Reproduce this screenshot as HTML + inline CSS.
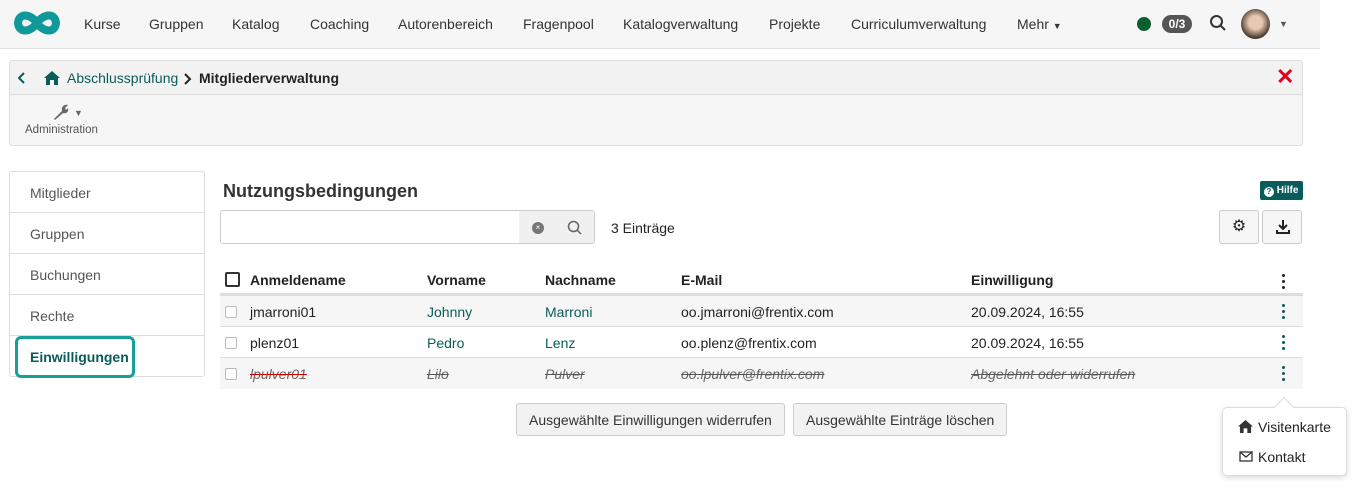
<!DOCTYPE html>
<html><head><meta charset="utf-8"><style>
*{box-sizing:border-box;margin:0;padding:0}
body{width:1356px;height:489px;background:#fff;font-family:"Liberation Sans",sans-serif;font-size:14px;color:#222;position:relative;overflow:hidden}
.abs{position:absolute}
.nav{left:0;top:0;width:1320px;height:49px;background:#f6f6f6;border-bottom:1px solid #e4e4e4}
.nav span{position:absolute;top:16px;font-size:14px;color:#333}
.teal{color:#0a5c5c}
.row{position:absolute;left:220px;width:1083px;height:31px;border-bottom:1px solid #ddd}
.row span{position:absolute;top:8px}
.s{text-decoration:line-through;text-decoration-color:#555;font-style:italic;color:#666}
.cb{position:absolute;left:5px;top:10px;width:12px;height:12px;border:1px solid #bbb;border-radius:2px;background:#fff}
.dots{position:absolute;left:1062px;top:8px;width:3px}
.dots i{display:block;width:3px;height:3px;border-radius:50%;background:#0a5c5c;margin-bottom:3px}
.side{left:9px;top:171px;width:196px;height:206px;border:1px solid #ddd;border-radius:3px}
.side div{height:41px;border-bottom:1px solid #ddd;padding:13px 0 0 20px;color:#555}
.btn{position:absolute;top:403px;height:33px;border:1px solid #ccc;border-radius:3px;background:#f2f2f2;padding:8px 12px;font-size:14px;color:#333}
</style></head><body>
<div class="abs nav">
<svg class="abs" style="left:11px;top:8px" width="52" height="30" viewBox="0 0 52 30"><path d="M26 15C20 6 8 4 7 15 8 26 20 24 26 15 32 6 44 4 45 15 44 26 32 24 26 15Z" fill="none" stroke="#11999a" stroke-width="8"/></svg>
<span style="left:84px">Kurse</span><span style="left:149px">Gruppen</span><span style="left:232px">Katalog</span><span style="left:310px">Coaching</span><span style="left:398px">Autorenbereich</span><span style="left:523px">Fragenpool</span><span style="left:623px">Katalogverwaltung</span><span style="left:769px">Projekte</span><span style="left:851px">Curriculumverwaltung</span><span style="left:1017px">Mehr <small style="font-size:9px">▼</small></span>
<div class="abs" style="left:1137px;top:17px;width:14px;height:14px;border-radius:50%;background:#0b5e2e"></div>
<div class="abs" style="left:1162px;top:15px;width:30px;height:18px;border-radius:9px;background:#555;color:#fff;font-size:12px;font-weight:bold;text-align:center;line-height:18px">0/3</div>
<svg class="abs" style="left:1209px;top:14px" width="18" height="18"><circle cx="7.5" cy="7.5" r="5.5" fill="none" stroke="#333" stroke-width="2"/><path d="M11.5 11.5 16 16" stroke="#333" stroke-width="2"/></svg>
<div class="abs" style="left:1241px;top:9px;width:29px;height:30px;border-radius:50%;background:radial-gradient(circle at 50% 45%,#e8c8b0 30%,#4a3a30 70%)"></div>
<span style="left:1279px;font-size:9px;top:19px;color:#555">▼</span>
</div>
<div class="abs" style="left:9px;top:60px;width:1294px;height:86px;border:1px solid #ddd;border-radius:3px;background:#f6f6f6">
<div style="height:34px;background:#f2f2f2;border-bottom:1px solid #ddd;position:relative">
<svg class="abs" style="left:8px;top:11px" width="8" height="12"><path d="M6 1 1 6 6 11" fill="none" stroke="#0a5c5c" stroke-width="2"/></svg>
<svg class="abs" style="left:34px;top:10px" width="16" height="14" viewBox="0 0 16 14"><path d="M8 0 16 7H14V14H10V9H6V14H2V7H0Z" fill="#0a5c5c"/></svg>
<span class="abs teal" style="left:57px;top:9px">Abschlussprüfung</span>
<svg class="abs" style="left:174px;top:12px" width="8" height="12"><path d="M1 1 6 6 1 11" fill="none" stroke="#222" stroke-width="2"/></svg>
<span class="abs" style="left:189px;top:9px"><b>Mitgliederverwaltung</b></span>
<span class="abs" style="left:1266px;top:3px;color:#e3001b;font-size:22px;font-weight:bold">✕</span>
</div>
<svg class="abs" style="left:42px;top:42px" width="18" height="18" viewBox="0 0 18 18"><path d="M2 16 10 8C9 4 12 1 16 2L13 5 14 7 16 5C17 9 14 11 11 10L3 17Z" fill="#666"/></svg>
<span class="abs" style="left:64px;top:47px;font-size:9px;color:#666">▼</span>
<span class="abs" style="left:15px;top:63px;font-size:11.5px;color:#555">Administration</span>
</div>
<div class="abs side"><div>Mitglieder</div><div>Gruppen</div><div>Buchungen</div><div>Rechte</div><div style="border:none"></div></div>
<div class="abs" style="left:15px;top:336px;width:120px;height:42px;border:3px solid #17a098;border-radius:6px;padding:10px 0 0 12px;font-weight:bold;color:#0a5c5c">Einwilligungen</div>
<div class="abs" style="left:223px;top:181px;font-size:18px;font-weight:bold;color:#333">Nutzungsbedingungen</div>
<div class="abs" style="left:1260px;top:181px;width:43px;height:19px;background:#0a5c5c;border-radius:2px;color:#fff;font-size:10px;font-weight:bold;padding:4px 0 0 4px"><span style="display:inline-block;width:10px;height:10px;border-radius:50%;background:#fff;color:#0a5c5c;font-size:8px;text-align:center;line-height:10px;vertical-align:-1px">?</span> Hilfe</div>
<div class="abs" style="left:220px;top:210px;width:375px;height:34px;border:1px solid #ccc;border-radius:3px;overflow:hidden"><div class="abs" style="left:298px;top:0;width:77px;height:34px;background:#f0f0f0"></div>
<div class="abs" style="left:311px;top:11px;width:12px;height:12px;border-radius:50%;background:#777;color:#fff;font-size:8px;text-align:center;line-height:12px">×</div>
<svg class="abs" style="left:346px;top:9px" width="16" height="16"><circle cx="6.5" cy="6.5" r="5" fill="none" stroke="#666" stroke-width="1.5"/><path d="M10 10 14 14" stroke="#666" stroke-width="1.5"/></svg></div>
<span class="abs" style="left:611px;top:220px">3 Einträge</span>
<div class="abs" style="left:1219px;top:210px;width:40px;height:34px;border:1px solid #ccc;border-radius:3px;background:#f6f6f6;text-align:center;line-height:32px;font-size:16px">⚙</div>
<div class="abs" style="left:1262px;top:210px;width:40px;height:34px;border:1px solid #ccc;border-radius:3px;background:#f6f6f6"><svg class="abs" style="left:13px;top:9px" width="14" height="14"><path d="M7 0V9M3 5 7 9 11 5M1 10V13H13V10" fill="none" stroke="#222" stroke-width="2"/></svg></div>
<div class="row" style="top:264px;height:32px;border-bottom:3px solid #ddd;font-weight:bold">
<div class="abs" style="left:5px;top:8px;width:15px;height:15px;border:2px solid #333;border-radius:2px"></div>
<span style="left:30px">Anmeldename</span><span style="left:207px">Vorname</span><span style="left:325px">Nachname</span><span style="left:461px">E-Mail</span><span style="left:751px">Einwilligung</span>
<div class="dots" style="top:10px"><i style="background:#222"></i><i style="background:#222"></i><i style="background:#222"></i></div></div>
<div class="row" style="top:296px;background:#f6f6f6"><div class="cb"></div><span style="left:30px">jmarroni01</span><span class="teal" style="left:207px">Johnny</span><span class="teal" style="left:325px">Marroni</span><span style="left:461px">oo.jmarroni@frentix.com</span><span style="left:751px">20.09.2024, 16:55</span><div class="dots"><i></i><i></i><i></i></div></div>
<div class="row" style="top:327px"><div class="cb"></div><span style="left:30px">plenz01</span><span class="teal" style="left:207px">Pedro</span><span class="teal" style="left:325px">Lenz</span><span style="left:461px">oo.plenz@frentix.com</span><span style="left:751px">20.09.2024, 16:55</span><div class="dots"><i></i><i></i><i></i></div></div>
<div class="row" style="top:358px;background:#f6f6f6;border:none"><div class="cb"></div><span class="s" style="left:30px;text-decoration-color:#c00">lpulver01</span><span class="s teal" style="left:207px">Lilo</span><span class="s teal" style="left:325px">Pulver</span><span class="s" style="left:461px">oo.lpulver@frentix.com</span><span class="s" style="left:751px">Abgelehnt oder widerrufen</span><div class="dots"><i></i><i></i><i></i></div></div>
<div class="btn" style="left:516px">Ausgewählte Einwilligungen widerrufen</div>
<div class="btn" style="left:793px">Ausgewählte Einträge löschen</div>
<div class="abs" style="left:1222px;top:407px;width:125px;height:69px;border:1px solid #ddd;border-radius:5px;background:#fff;box-shadow:0 2px 6px rgba(0,0,0,.15)"></div>
<div class="abs" style="left:1277px;top:400px;width:14px;height:14px;background:#fff;border-left:1px solid #ddd;border-top:1px solid #ddd;transform:rotate(45deg)"></div>
<svg class="abs" style="left:1238px;top:420px" width="15" height="13" viewBox="0 0 16 14"><path d="M8 0 16 7H14V14H10V9H6V14H2V7H0Z" fill="#333"/></svg>
<span class="abs" style="left:1258px;top:419px">Visitenkarte</span>
<svg class="abs" style="left:1239px;top:451px" width="14" height="11"><rect x="1" y="1" width="12" height="9" fill="none" stroke="#333" stroke-width="1.3"/><path d="M1 1 7 6 13 1" fill="none" stroke="#333" stroke-width="1.3"/></svg>
<span class="abs" style="left:1258px;top:449px">Kontakt</span>
</body></html>
